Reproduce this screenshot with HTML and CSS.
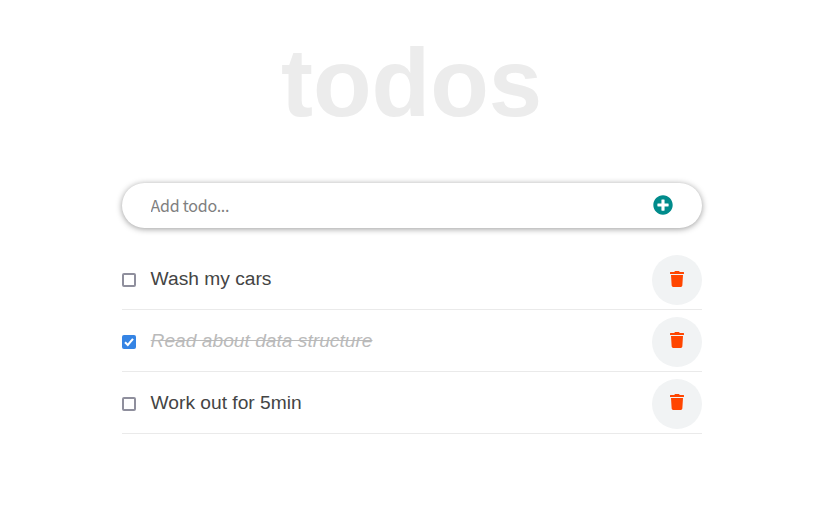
FILE: index.html
```html
<!DOCTYPE html>
<html lang="en">
<head>
<meta charset="utf-8">
<title>todos</title>
<link rel="stylesheet" href="styles.css">
</head>
<body>
<main class="container">
  <header class="header"><h1>todos</h1></header>
  <form class="form">
    <input type="text" class="input-text" placeholder="Add todo...">
    <button class="input-submit" type="button" aria-label="Add">
      <svg viewBox="0 0 512 512" width="20" height="20" fill="currentColor"><path d="M256 8C119 8 8 119 8 256s111 248 248 248 248-111 248-248S393 8 256 8zm144 276c0 6.600-5.400 12-12 12h-92v92c0 6.600-5.400 12-12 12h-56c-6.600 0-12-5.400-12-12v-92h-92c-6.600 0-12-5.400-12-12v-56c0-6.600 5.400-12 12-12h92v-92c0-6.600 5.400-12 12-12h56c6.600 0 12 5.400 12 12v92h92c6.600 0 12 5.400 12 12v56z"/></svg>
    </button>
  </form>
  <ul class="list">
    <li class="item"><span class="check"></span><span class="label">Wash my cars</span><button class="delete first" aria-label="Delete"><svg viewBox="0 0 448 512" width="14" height="16" fill="currentColor"><path d="M432 32H312l-9.400-18.700A24 24 0 0 0 281.100 0H166.800a23.720 23.720 0 0 0-21.400 13.300L136 32H16A16 16 0 0 0 0 48v32a16 16 0 0 0 16 16h416a16 16 0 0 0 16-16V48a16 16 0 0 0-16-16zM53.200 467a48 48 0 0 0 47.900 45h245.800a48 48 0 0 0 47.900-45L416 128H32z"/></svg></button></li>
    <li class="item"><span class="check checked"><svg viewBox="0 0 14 14" width="14" height="14"><path d="M3 7.300 5.800 10 11 3.800" fill="none" stroke="#fff" stroke-width="2.100"/></svg></span><span class="label done">Read about data structure</span><button class="delete" aria-label="Delete"><svg viewBox="0 0 448 512" width="14" height="16" fill="currentColor"><path d="M432 32H312l-9.400-18.700A24 24 0 0 0 281.100 0H166.800a23.720 23.720 0 0 0-21.400 13.300L136 32H16A16 16 0 0 0 0 48v32a16 16 0 0 0 16 16h416a16 16 0 0 0 16-16V48a16 16 0 0 0-16-16zM53.200 467a48 48 0 0 0 47.900 45h245.800a48 48 0 0 0 47.900-45L416 128H32z"/></svg></button></li>
    <li class="item"><span class="check"></span><span class="label">Work out for 5min</span><button class="delete" aria-label="Delete"><svg viewBox="0 0 448 512" width="14" height="16" fill="currentColor"><path d="M432 32H312l-9.400-18.700A24 24 0 0 0 281.100 0H166.800a23.720 23.720 0 0 0-21.400 13.300L136 32H16A16 16 0 0 0 0 48v32a16 16 0 0 0 16 16h416a16 16 0 0 0 16-16V48a16 16 0 0 0-16-16zM53.200 467a48 48 0 0 0 47.900 45h245.800a48 48 0 0 0 47.900-45L416 128H32z"/></svg></button></li>
  </ul>
</main>
</body>
</html>
```

FILE: styles.css
```css
* { box-sizing: border-box; margin: 0; padding: 0; }
body { background: #fff; color: #444; font-family: "Liberation Sans", Arial, sans-serif; }
.container { width: 580px; margin-left: 121.600px; padding-top: 28px; }
.header { height: 155px; }
h1 { font-size: 96px; line-height: 110px; font-weight: 700; text-align: center; color: #ececec; }
.form { display: flex; align-items: center; height: 45px; border-radius: 50px; background: #fff; box-shadow: 0 1px 6px rgba(0,0,0,.4); padding: 0 29px; }
.input-text { flex: 1; min-width: 0; margin-top: -2px; border: 0; outline: 0; background: transparent; font: 400 16px/24px "Noto Sans CJK SC", sans-serif; letter-spacing: -.25px; }
.input-text::placeholder { color: #7f7f7f; opacity: 1; }
.input-submit { display: flex; margin-top: -1px; border: 0; background: transparent; color: darkcyan; }
.list { list-style: none; margin-top: 20px; }
.item { display: flex; align-items: center; height: 62px; border-bottom: 1px solid #eaeaea; }
.check { display: flex; width: 14px; height: 14px; margin: 2px 15px 0 0; border: 2px solid #8f8f9d; border-radius: 2px; }
.checked { border: 0; background: #3584e4; }
.label { flex: 1; font-size: 19.200px; line-height: 22px; }
.done { font-style: italic; color: #bababa; text-decoration: line-through; }
.delete { display: flex; align-items: center; justify-content: center; width: 50px; height: 50px; margin-top: 2px; padding-bottom: 4px; border: 0; border-radius: 50%; background: #f1f3f4; color: orangered; }
.first { padding-bottom: 2px; }
```
